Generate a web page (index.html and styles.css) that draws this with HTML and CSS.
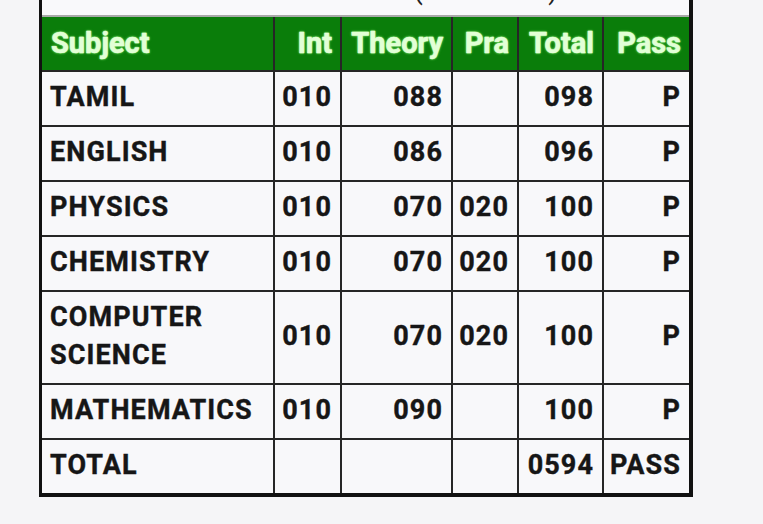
FILE: index.html
```html
<!DOCTYPE html>
<html lang="en">
<head>
<meta charset="utf-8">
<title>Marks</title>
<link rel="stylesheet" href="styles.css">
</head>
<body>
<div class="sheet">
  <div class="title"><div class="title-text">MARK STATEMENT (MAR 2020)</div></div>
  <div class="grid" role="table">
    <div class="hd left">Subject</div>
    <div class="hd">Int</div>
    <div class="hd">Theory</div>
    <div class="hd">Pra</div>
    <div class="hd">Total</div>
    <div class="hd">Pass</div>

    <div class="c left">TAMIL</div>
    <div class="c">010</div>
    <div class="c">088</div>
    <div class="c"></div>
    <div class="c">098</div>
    <div class="c">P</div>

    <div class="c left">ENGLISH</div>
    <div class="c">010</div>
    <div class="c">086</div>
    <div class="c"></div>
    <div class="c">096</div>
    <div class="c">P</div>

    <div class="c left">PHYSICS</div>
    <div class="c">010</div>
    <div class="c">070</div>
    <div class="c">020</div>
    <div class="c">100</div>
    <div class="c">P</div>

    <div class="c left">CHEMISTRY</div>
    <div class="c">010</div>
    <div class="c">070</div>
    <div class="c">020</div>
    <div class="c">100</div>
    <div class="c">P</div>

    <div class="c left two">COMPUTER SCIENCE</div>
    <div class="c">010</div>
    <div class="c">070</div>
    <div class="c">020</div>
    <div class="c">100</div>
    <div class="c">P</div>

    <div class="c left">MATHEMATICS</div>
    <div class="c">010</div>
    <div class="c">090</div>
    <div class="c"></div>
    <div class="c">100</div>
    <div class="c">P</div>

    <div class="c left">TOTAL</div>
    <div class="c"></div>
    <div class="c"></div>
    <div class="c"></div>
    <div class="c">0594</div>
    <div class="c">PASS</div>
  </div>
</div>
</body>
</html>
```

FILE: styles.css
```css
html, body {
  margin: 0;
  padding: 0;
  background: #f5f5f7;
}
body {
  font-family: Roboto, "Liberation Sans", sans-serif;
  font-weight: 700;
  color: #161616;
}
.sheet {
  margin-left: 39px;
  width: 654px;
  box-sizing: border-box;
  border-left: 3px solid #111;
  border-right: 4px solid #111;
  border-bottom: 4px solid #111;
  background: #222;
}
.title {
  height: 15px;
  overflow: hidden;
  background: #f9f9fb;
  border-bottom: 2px solid #a9a9a9;
}
.title-text {
  margin-top: -23px;
  font-size: 27px;
  line-height: 27px;
  text-align: center;
  color: #222;
  font-weight: 400;
}
.grid {
  display: grid;
  grid-template-columns: 231px 65px 109px 64px 83px 85px;
  grid-template-rows: 53px 53px 53px 53px 53px 91px 53px 53px;
  gap: 2px;
  background: #262626;
}
.hd {
  background: #0a7d0a;
  color: #e2ffd6;
  font-size: 29px;
  -webkit-text-stroke: 0.4px #e2ffd6;
  text-shadow: 0 0 1px #b0f5a2, 0 0 2px #8ce67c, 0 0 3px #5fcf52;
  display: flex;
  align-items: center;
  justify-content: flex-end;
  padding: 0 8px 1px 9px;
}
.c {
  background: #f8f8fa;
  font-size: 27px;
  line-height: 38px;
  letter-spacing: 1.1px;
  -webkit-text-stroke: 0.4px #161616;
  display: flex;
  align-items: center;
  justify-content: flex-end;
  text-align: right;
  padding: 0 8px 4px 8px;
}
.left {
  justify-content: flex-start;
  text-align: left;
}
```
